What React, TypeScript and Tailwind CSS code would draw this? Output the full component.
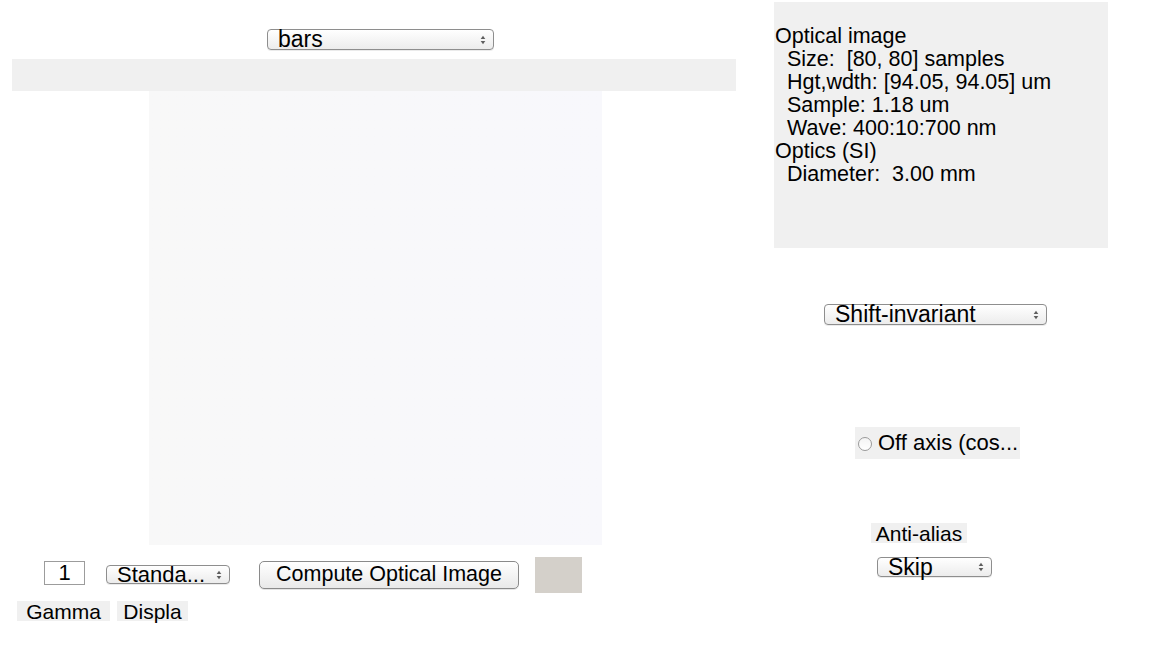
import React from "react";

const font = { fontFamily: '"Liberation Sans", Arial, Helvetica, sans-serif' };

function Arrows() {
  return (
    <svg width="6" height="10" viewBox="0 0 6 10" className="shrink-0">
      <path d="M3 0.8 L5.3 4 L0.7 4 Z" fill="#5e5e5e" />
      <path d="M3 9.2 L5.3 6 L0.7 6 Z" fill="#5e5e5e" />
    </svg>
  );
}

function Select({ label, className }: { label: string; className: string }) {
  return (
    <div
      className={
        "flex items-center justify-between pl-[10px] pr-[7px] rounded-[4px] border border-[#8e8e8e] bg-gradient-to-b from-white to-[#ececec] text-black whitespace-nowrap shadow-[0_1px_0_rgba(0,0,0,0.08)] " +
        className
      }
    >
      <span className="leading-none">{label}</span>
      <Arrows />
    </div>
  );
}

export default function App() {
  return (
    <div className="w-[1153px] h-[650px] bg-white flex overflow-hidden text-black" style={font}>
      {/* Left column */}
      <div className="w-[774px] flex flex-col">
        <div className="pt-[29px] pl-[267px]">
          <Select label="bars" className="w-[227px] h-[21px] text-[23px]" />
        </div>
        <div className="mt-[9px] ml-[12px] w-[724px] h-[32px] bg-[#f0f0f0]" />
        <div className="ml-[149px] w-[453px] h-[454px] bg-gradient-to-r from-[#f8f8f8] via-[#f8f8fa] to-[#f8f8fc]" />
        <div className="mt-[12px] flex items-start">
          <div className="mt-[4px] ml-[44px] w-[41px] h-[24px] border border-[#9c9c9c] bg-white flex items-center justify-center text-[22px] leading-none">
            1
          </div>
          <Select label="Standa..." className="mt-[8px] ml-[21px] w-[124px] h-[19px] text-[22px]" />
          <div className="mt-[4px] ml-[29px] w-[260px] h-[28px] rounded-[5px] border border-[#8a8a8a] bg-gradient-to-b from-white to-[#e9e9e9] flex items-center justify-center text-[21.5px] leading-none whitespace-nowrap shadow-[0_1px_0_rgba(0,0,0,0.1)]">
            Compute Optical Image
          </div>
          <div className="ml-[16px] w-[47px] h-[36px] bg-[#d4d0ca]" />
        </div>
        <div className="mt-[8px] flex">
          <div className="ml-[17px] w-[93px] h-[20px] bg-[#f0f0f0] text-center text-[21px] leading-[21px]">
            Gamma
          </div>
          <div className="ml-[7px] w-[71px] h-[20px] bg-[#f0f0f0] text-center text-[21px] leading-[21px]">
            Displa
          </div>
        </div>
      </div>

      {/* Right column */}
      <div className="flex flex-col">
        <div className="mt-[2px] w-[334px] h-[246px] bg-[#f0f0f0] pt-[23px] pl-[1px] text-[21.5px] leading-[23px] whitespace-pre">
          {"Optical image\n  Size:  [80, 80] samples\n  Hgt,wdth: [94.05, 94.05] um\n  Sample: 1.18 um\n  Wave: 400:10:700 nm\nOptics (SI)\n  Diameter:  3.00 mm"}
        </div>
        <div className="mt-[56px] ml-[50px]">
          <Select label="Shift-invariant" className="w-[223px] h-[21px] text-[23px]" />
        </div>
        <div className="mt-[102px] ml-[81px] w-[165px] h-[32px] bg-[#f0f0f0] flex items-center pl-[3px] text-[22px] whitespace-nowrap">
          <div className="w-[14px] h-[14px] rounded-full border border-[#9a9a9a] bg-gradient-to-b from-[#f4f4f4] to-white mr-[6px] mt-[2px] shrink-0" />
          <span className="leading-none">Off axis (cos...</span>
        </div>
        <div className="mt-[64px] ml-[97px] w-[96px] h-[20px] bg-[#f0f0f0] text-center text-[21px] leading-[21px]">
          Anti-alias
        </div>
        <div className="mt-[14px] ml-[103px]">
          <Select label="Skip" className="w-[115px] h-[20px] text-[23px]" />
        </div>
      </div>
    </div>
  );
}
